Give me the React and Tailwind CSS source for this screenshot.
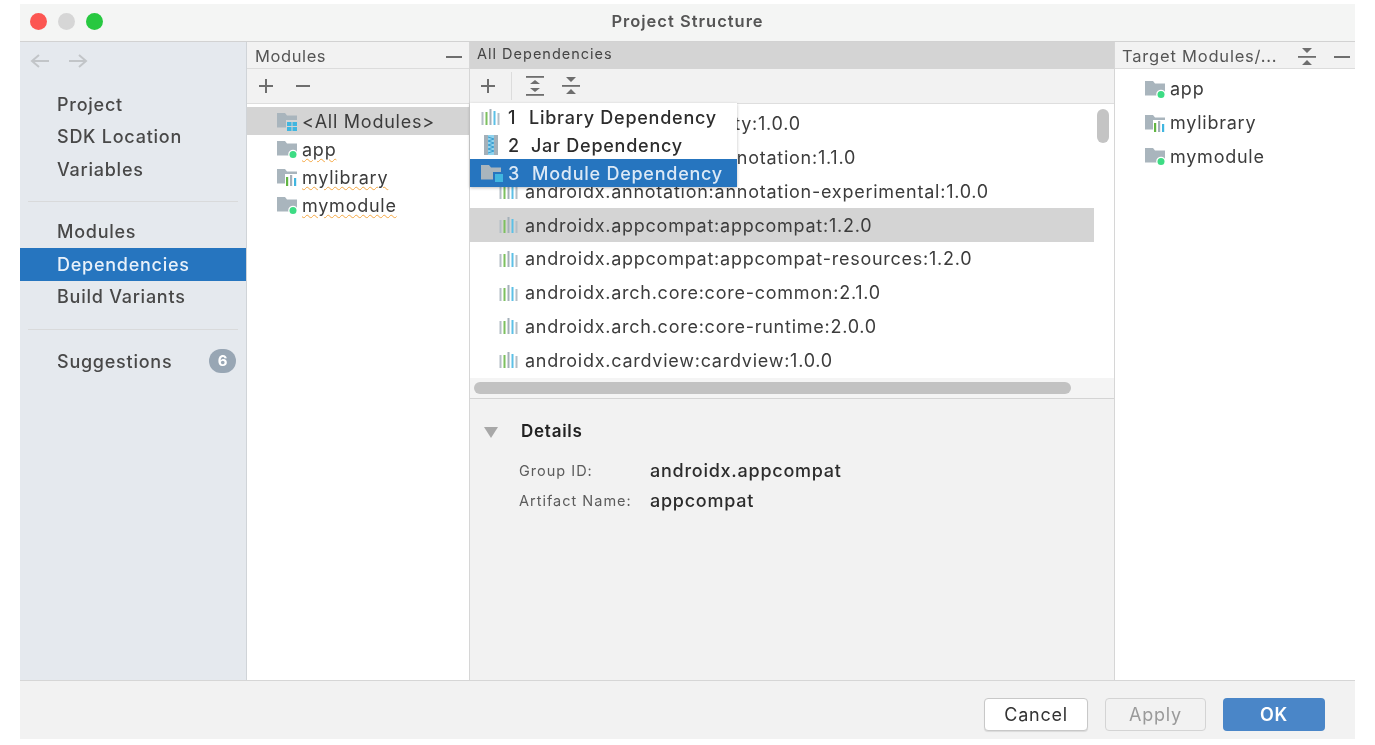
function Folder({ badge }) {
  return (
    <svg width="24" height="20" viewBox="0 0 24 20" className="shrink-0">
      <path d="M1 2h8l2 2.500h10v12H1z" fill="#a9b5bd" />
      {badge === "dot" && <><circle cx="17" cy="15.500" r="4.800" fill="#fff" /><circle cx="17" cy="15.500" r="3.500" fill="#3ddc84" /></>}
      {badge === "lib" && (
        <>
          <rect x="9" y="7" width="16" height="14" fill="#fff" />
          <rect x="10" y="10" width="2.200" height="9" fill="#62b543" />
          <rect x="14" y="8" width="2.200" height="11" fill="#a4b0b9" />
          <rect x="18" y="11" width="2.200" height="8" fill="#40b6e0" />
        </>
      )}
      {badge === "grid" && (
        <>
          <rect x="10" y="9" width="14" height="11" fill="#d4d4d4" />
          <rect x="11" y="11" width="4.500" height="4" fill="#40b6e0" />
          <rect x="16.500" y="11" width="4.500" height="4" fill="#40b6e0" />
          <rect x="11" y="16" width="4.500" height="4" fill="#40b6e0" />
          <rect x="16.500" y="16" width="4.500" height="4" fill="#40b6e0" />
        </>
      )}
      {badge === "mod" && (
        <>
          <rect x="13" y="9" width="11" height="11" fill="#2675bf" />
          <rect x="15" y="11" width="8" height="8" fill="#40b6e0" />
        </>
      )}
    </svg>
  );
}

function LibIcon() {
  return (
    <svg width="20" height="18" viewBox="0 0 20 18" className="shrink-0">
      <rect x="0.500" y="4" width="2" height="13" fill="#b4bec6" />
      <rect x="4.500" y="4" width="2" height="13" fill="#7cc05f" />
      <rect x="8.500" y="1" width="2" height="16" fill="#a4b0b9" />
      <rect x="12.500" y="3" width="2" height="14" fill="#5cc0e6" />
      <rect x="16.500" y="5" width="2" height="12" fill="#b4bec6" />
    </svg>
  );
}

function JarIcon() {
  return (
    <svg width="14" height="20" viewBox="0 0 14 20" className="shrink-0">
      <rect x="0" y="0" width="14" height="20" fill="#a4b0b9" />
      <rect x="4" y="0" width="6" height="20" fill="#8fd3ee" />
      <path d="M4 2l6 2-6 2 6 2-6 2 6 2-6 2 6 2-6 2" stroke="#3f9fd0" strokeWidth="1" fill="none" />
    </svg>
  );
}

function Expand() {
  return (
    <svg width="18" height="20" viewBox="0 0 18 20" fill="#6e6e6e">
      <rect x="0" y="0" width="18" height="1.800" />
      <rect x="0" y="18" width="18" height="1.800" />
      <path d="M9 4l5 4H4zM9 16l-5-4h10z" />
    </svg>
  );
}
function Collapse() {
  return (
    <svg width="18" height="20" viewBox="0 0 18 20" fill="#6e6e6e">
      <rect x="0" y="9" width="18" height="1.800" />
      <path d="M4 1h10L9 6zM9 13l5 5H4z" />
    </svg>
  );
}
function Plus() {
  return (
    <svg width="16" height="16" viewBox="0 0 16 16" fill="#6e6e6e">
      <rect x="1" y="7" width="14" height="2" />
      <rect x="7" y="1" width="2" height="14" />
    </svg>
  );
}
function Minus({ w = 16 }) {
  return (
    <svg width={w} height="16" viewBox={`0 0 ${w} 16`} fill="#6e6e6e">
      <rect x="1" y="7" width={w - 2} height="2" />
    </svg>
  );
}
function Arrow({ flip }) {
  return (
    <svg width="20" height="16" viewBox="0 0 20 16" fill="none" stroke="#c2c5c8" strokeWidth="2" className={flip ? "rotate-180" : ""}>
      <path d="M19 8H2M9 2L2 8l7 6" />
    </svg>
  );
}

function NavItem({ children, active }) {
  return (
    <div className={`h-[32.5px] flex items-center pl-[37px] ${active ? "bg-[#2675bf] text-[#e8f1fa]" : "text-[#484848]"}`}>
      {children}
    </div>
  );
}

function ModuleRow({ icon, name, selected, squiggle }) {
  return (
    <div className={`h-[28px] flex items-center pl-[29px] gap-[2px] ${selected ? "bg-[#d4d4d4]" : ""}`}>
      <Folder badge={icon} />
      <span className={squiggle ? "underline decoration-wavy decoration-[#f5a742] decoration-1 underline-offset-2" : ""}>{name}</span>
    </div>
  );
}

const deps = [
  "androidx.activity:activity:1.0.0",
  "androidx.annotation:annotation:1.1.0",
  "androidx.annotation:annotation-experimental:1.0.0",
  "androidx.appcompat:appcompat:1.2.0",
  "androidx.appcompat:appcompat-resources:1.2.0",
  "androidx.arch.core:core-common:2.1.0",
  "androidx.arch.core:core-runtime:2.0.0",
  "androidx.cardview:cardview:1.0.0",
];

export default function App() {
  return (
    <div className="w-[1375px] h-[745px] overflow-hidden bg-white pt-1 pb-[6px] px-5 font-['Inter','Noto_Sans',sans-serif] text-[#3c3c3c] text-[18px] tracking-[0.75px] blur-[0.6px]">
      <div className="h-full flex flex-col bg-[#f2f2f2]">
        <div className="relative h-[38px] shrink-0 flex items-center justify-center border-b border-[#d2d2d2] bg-[#f4f5f4] pb-[2px]">
          <div className="absolute left-[10px] top-[9px] flex gap-[11px]">
            <span className="w-[17px] h-[17px] rounded-full bg-[#fc5652]" />
            <span className="w-[17px] h-[17px] rounded-full bg-[#d6d6d6]" />
            <span className="w-[17px] h-[17px] rounded-full bg-[#27c840]" />
          </div>
          <span className="font-semibold text-[#555] text-[16.500px] tracking-[1px]">Project Structure</span>
        </div>

        <div className="flex-1 flex min-h-0">
          <aside className="w-[227px] shrink-0 bg-[#e5e9ee] border-r border-[#d0d4d8] flex flex-col">
            <div className="h-[38px] flex items-center gap-[18px] pl-[10px] shrink-0">
              <Arrow /><Arrow flip />
            </div>
            <div className="pt-[8px] font-medium">
              <NavItem>Project</NavItem>
              <NavItem>SDK Location</NavItem>
              <NavItem>Variables</NavItem>
            </div>
            <div className="mx-[8px] mt-[15px] mb-[14px] h-px bg-[#d9dadb]" />
            <div className="font-medium">
              <NavItem>Modules</NavItem>
              <NavItem active>Dependencies</NavItem>
              <NavItem>Build Variants</NavItem>
            </div>
            <div className="mx-[8px] mt-[16px] mb-[15px] h-px bg-[#d9dadb]" />
            <div className="font-medium flex items-center justify-between pl-[37px] pr-[10px] h-[32px]">
              <span className="text-[#484848]">Suggestions</span>
              <span className="w-[27px] h-[24px] rounded-full bg-[#98a6b4] text-white font-bold text-[15px] tracking-normal flex items-center justify-center">6</span>
            </div>
          </aside>

          <section className="w-[223px] shrink-0 flex flex-col border-r border-[#d6d6d6]">
            <div className="h-[27px] shrink-0 flex items-center justify-between pl-[8px] pr-[6px] pt-[3px] border-b border-[#dcdcdc] text-[#555] text-[16.500px] tracking-[0.6px]">
              <span>Modules</span>
              <Minus w={18} />
            </div>
            <div className="h-[35px] shrink-0 flex items-center gap-[21px] pl-[11px] border-b border-[#dedede]">
              <Plus /><Minus />
            </div>
            <div className="flex-1 bg-white pt-[3px] text-[#3c3c3c]">
              <ModuleRow icon="grid" name="<All Modules>" selected />
              <ModuleRow icon="dot" name="app" squiggle />
              <ModuleRow icon="lib" name="mylibrary" squiggle />
              <ModuleRow icon="dot" name="mymodule" squiggle />
            </div>
          </section>

          <section className="relative flex-1 min-w-0 flex flex-col border-r border-[#d6d6d6]">
            <div className="h-[27px] shrink-0 flex items-center pl-[7px] pb-[3px] bg-[#d4d4d4] text-[#444] text-[14.500px] tracking-[1px]">All Dependencies</div>
            <div className="h-[35px] shrink-0 flex items-center pl-[10px] border-b border-[#dedede]">
              <Plus />
              <div className="w-px h-[28px] bg-[#dcdcdc] ml-[15px] mr-[14px]" />
              <Expand />
              <div className="w-[18px]" />
              <Collapse />
            </div>
            <div className="h-[295px] shrink-0 flex flex-col bg-white border-b border-[#d4d4d4]">
              <div className="flex-1 flex min-h-0">
                <div className="flex-1 min-w-0 pt-[3px]">
                  {deps.map((d, i) => (
                    <div key={d} className={`h-[33.750px] flex items-center gap-[6px] pl-[29px] whitespace-nowrap text-[#3c3c3c] ${i === 3 ? "bg-[#d4d4d4]" : ""}`}>
                      <LibIcon />
                      <span>{d}</span>
                    </div>
                  ))}
                </div>
                <div className="w-[20px] shrink-0 pl-[3px] pt-[5px]">
                  <div className="w-[12px] h-[34px] rounded-[6px] bg-[#c4c4c4]" />
                </div>
              </div>
              <div className="h-[20px] shrink-0 bg-[#f4f4f4] pl-[4px] pt-[4px]">
                <div className="w-[597px] h-[12px] rounded-[6px] bg-[#c2c2c2]" />
              </div>
            </div>
            <div className="flex-1 pt-[22px] pl-[14px] text-[#2c2c2c]">
              <div className="flex items-center h-[22px]">
                <svg width="14" height="11" viewBox="0 0 14 11" fill="#a8a8a8"><path d="M0 0h14L7 11z" /></svg>
                <span className="ml-[23px] font-semibold text-[17px] text-[#222]">Details</span>
              </div>
              <div className="mt-[14px] pl-[35px] grid grid-cols-[131px_auto] items-center gap-y-[3px] justify-start">
                <span className="text-[14.500px] tracking-[1px] text-[#5c5c5c]">Group ID:</span>
                <span className="font-medium">androidx.appcompat</span>
                <span className="text-[14.500px] tracking-[1px] text-[#5c5c5c]">Artifact Name:</span>
                <span className="font-medium">appcompat</span>
              </div>
            </div>

            <div className="absolute left-0 top-[61px] w-[267px] bg-white shadow-[0_1px_3px_rgba(0,0,0,0.25)] font-medium text-[#2c2c2c]">
              <div className="h-[28px] flex items-center pl-[11px]">
                <LibIcon /><span className="ml-[7px] w-[21px]">1</span><span>Library Dependency</span>
              </div>
              <div className="h-[28px] flex items-center pl-[14px]">
                <JarIcon /><span className="ml-[10px] w-[23px]">2</span><span>Jar Dependency</span>
              </div>
              <div className="h-[28px] flex items-center pl-[10px] bg-[#2675bf] text-[#dce9f6]">
                <Folder badge="mod" /><span className="ml-[4px] w-[24px]">3</span><span>Module Dependency</span>
              </div>
            </div>
          </section>

          <section className="w-[240px] shrink-0 flex flex-col">
            <div className="h-[27px] shrink-0 flex items-center justify-between pl-[7px] pr-[4px] pt-[3px] border-b border-[#dcdcdc] text-[#555] text-[16.500px] tracking-[0.8px]">
              <span>Target Modules/...</span>
              <div className="flex items-center gap-[17px]">
                <Collapse /><Minus w={18} />
              </div>
            </div>
            <div className="flex-1 bg-white pt-[3px] text-[#3c3c3c]">
              {[["dot", "app"], ["lib", "mylibrary"], ["dot", "mymodule"]].map(([b, n]) => (
                <div key={n} className="h-[33.750px] flex items-center gap-[2px] pl-[29px]">
                  <Folder badge={b} />
                  <span>{n}</span>
                </div>
              ))}
            </div>
          </section>
        </div>

        <footer className="h-[59px] shrink-0 border-t border-[#d6d6d6] flex items-center justify-end pr-[30px] pt-[8px] gap-[17px]">
          <button className="w-[104px] h-[33px] rounded-[4px] bg-white border border-[#c8c8c8] shadow-[0_1px_1px_rgba(0,0,0,0.1)] text-[#333]">Cancel</button>
          <button className="w-[101px] h-[33px] rounded-[4px] bg-[#f2f2f2] border border-[#d4d4d4] text-[#9a9a9a]">Apply</button>
          <button className="w-[102px] h-[33px] rounded-[4px] bg-[#4a86c8] text-white font-semibold">OK</button>
        </footer>
      </div>
    </div>
  );
}
